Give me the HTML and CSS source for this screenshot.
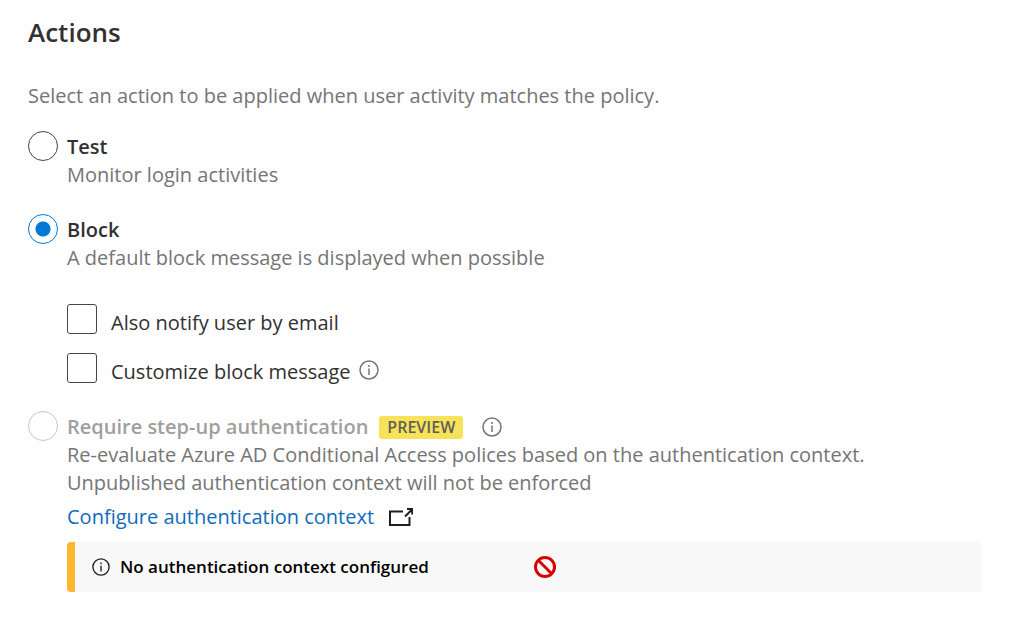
FILE: index.html
```html
<!DOCTYPE html>
<html lang="en">
<head>
    <meta charset="UTF-8">
    <meta name="viewport" content="width=device-width, initial-scale=1.0">
    <title>Actions</title>
    <link rel="stylesheet" href="styles.css">
</head>
<body>
    <main class="actions">
        <h1>Actions</h1>
        <p class="intro">Select an action to be applied when user activity matches the policy.</p>

        <form class="options">
            <div class="option">
                <input type="radio" name="action" id="actionTest" value="test">
                <div class="option-body">
                    <label class="option-title" for="actionTest">Test</label>
                    <p>Monitor login activities</p>
                </div>
            </div>

            <div class="option">
                <input type="radio" name="action" id="actionBlock" value="block" checked>
                <div class="option-body">
                    <label class="option-title" for="actionBlock">Block</label>
                    <p>A default block message is displayed when possible</p>
                    <div class="checks">
                        <div class="check">
                            <input type="checkbox" id="notifyUser">
                            <label for="notifyUser">Also notify user by email</label>
                        </div>
                        <div class="check">
                            <input type="checkbox" id="customMessage">
                            <label for="customMessage">Customize block message</label>
                            <svg class="info" viewBox="0 0 20 20" aria-hidden="true">
                                <circle cx="10" cy="10" r="9"/>
                                <path d="M10 8.5V15M10 5V7"/>
                            </svg>
                        </div>
                    </div>
                </div>
            </div>

            <div class="option">
                <input type="radio" name="action" id="actionStepUp" value="stepup" disabled>
                <div class="option-body">
                    <div class="title-row">
                        <label class="option-title disabled" for="actionStepUp">Require step-up authentication</label>
                        <span class="badge">PREVIEW</span>
                        <svg class="info" viewBox="0 0 20 20" aria-hidden="true">
                            <circle cx="10" cy="10" r="9"/>
                            <path d="M10 8.5V15M10 5V7"/>
                        </svg>
                    </div>
                    <p>Re-evaluate Azure AD Conditional Access polices based on the authentication context.<br>Unpublished authentication context will not be enforced</p>
                    <a class="configure" href="#">
                        Configure authentication context
                        <svg class="external" viewBox="0 0 24 18" aria-hidden="true">
                            <path d="M14 3.5H1V17H20.5V9"/>
                            <path d="M16 8.5L23 1.5M18 1H23.2V6.5"/>
                        </svg>
                    </a>
                    <div class="notice">
                        <svg class="info" viewBox="0 0 20 20" aria-hidden="true">
                            <circle cx="10" cy="10" r="9"/>
                            <path d="M10 8.5V15M10 5V7"/>
                        </svg>
                        <span>No authentication context configured</span>
                        <svg class="blocked" viewBox="0 0 22 22" aria-hidden="true">
                            <circle cx="11" cy="11" r="9.5"/>
                            <path d="M4.3 4.3L17.7 17.7"/>
                        </svg>
                    </div>
                </div>
            </div>
        </form>
    </main>
</body>
</html>
```

FILE: styles.css
```css
body {
    margin: 0;
    background: #fefefe;
    color: #323130;
    font-family: "Segoe UI", "Open Sans", sans-serif;
    font-size: 20px;
    line-height: 28px;
}
.actions {
    padding: 15px 43px 24px 28px;
}
h1 {
    margin: 0;
    font-size: 26px;
    font-weight: 600;
    line-height: 34px;
}
p {
    margin: 0;
    color: #757575;
}
.intro {
    margin: 33px 0 21px;
}
.options {
    display: flex;
    flex-direction: column;
    gap: 25px;
}
.option {
    display: grid;
    grid-template-columns: 30px 1fr;
    column-gap: 9px;
}
.option-body {
    padding-top: 2px;
}
.option-title {
    display: block;
    font-weight: 600;
}
.option-title.disabled {
    color: #a19f9d;
}
input {
    appearance: none;
    box-sizing: border-box;
    flex: none;
    width: 30px;
    height: 30px;
    margin: 0;
    border: 1px solid #484644;
    background: #fff;
}
input[type="radio"] {
    border-radius: 50%;
}
input[type="radio"]:checked {
    border-color: #0078d4;
    background: radial-gradient(circle, #0078d4 7px, #fff 8px);
}
input[type="radio"]:disabled {
    border-color: #c8c6c4;
}
input[type="checkbox"] {
    border-radius: 3px;
}
.checks {
    display: flex;
    flex-direction: column;
    gap: 16px;
    margin-top: 32px;
}
.check {
    display: flex;
}
.check label {
    padding: 5px 0 0 14px;
}
.check .info {
    margin: 7px 0 0 8px;
}
svg {
    flex: none;
    fill: none;
    stroke: currentColor;
}
.info {
    width: 20px;
    height: 20px;
    color: #757575;
    stroke-width: 1.5;
}
.title-row {
    display: flex;
    align-items: center;
}
.badge {
    margin: 0 19px 0 11px;
    padding: 0 8px;
    border-radius: 3px;
    background: #f7e35a;
    color: #605e5c;
    font-size: 16px;
    font-weight: 600;
    line-height: 23px;
}
.configure {
    display: inline-flex;
    align-items: center;
    gap: 15px;
    margin-top: 6px;
    color: #0f6cbd;
    text-decoration: none;
}
.external {
    width: 24px;
    height: 18px;
    color: #201f1e;
    stroke-width: 2;
}
.notice {
    position: relative;
    display: flex;
    align-items: center;
    gap: 10px;
    margin-top: 11px;
    padding: 11px 17px;
    border-left: 8px solid #ffb62e;
    border-radius: 4px;
    background: #f8f8f8;
    color: #000;
    font-size: 17px;
    font-weight: 600;
}
.notice .info {
    width: 18px;
    height: 18px;
    color: #201f1e;
}
.blocked {
    position: absolute;
    left: 459px;
    width: 22px;
    height: 22px;
    color: #d90000;
    stroke-width: 3;
}
```
